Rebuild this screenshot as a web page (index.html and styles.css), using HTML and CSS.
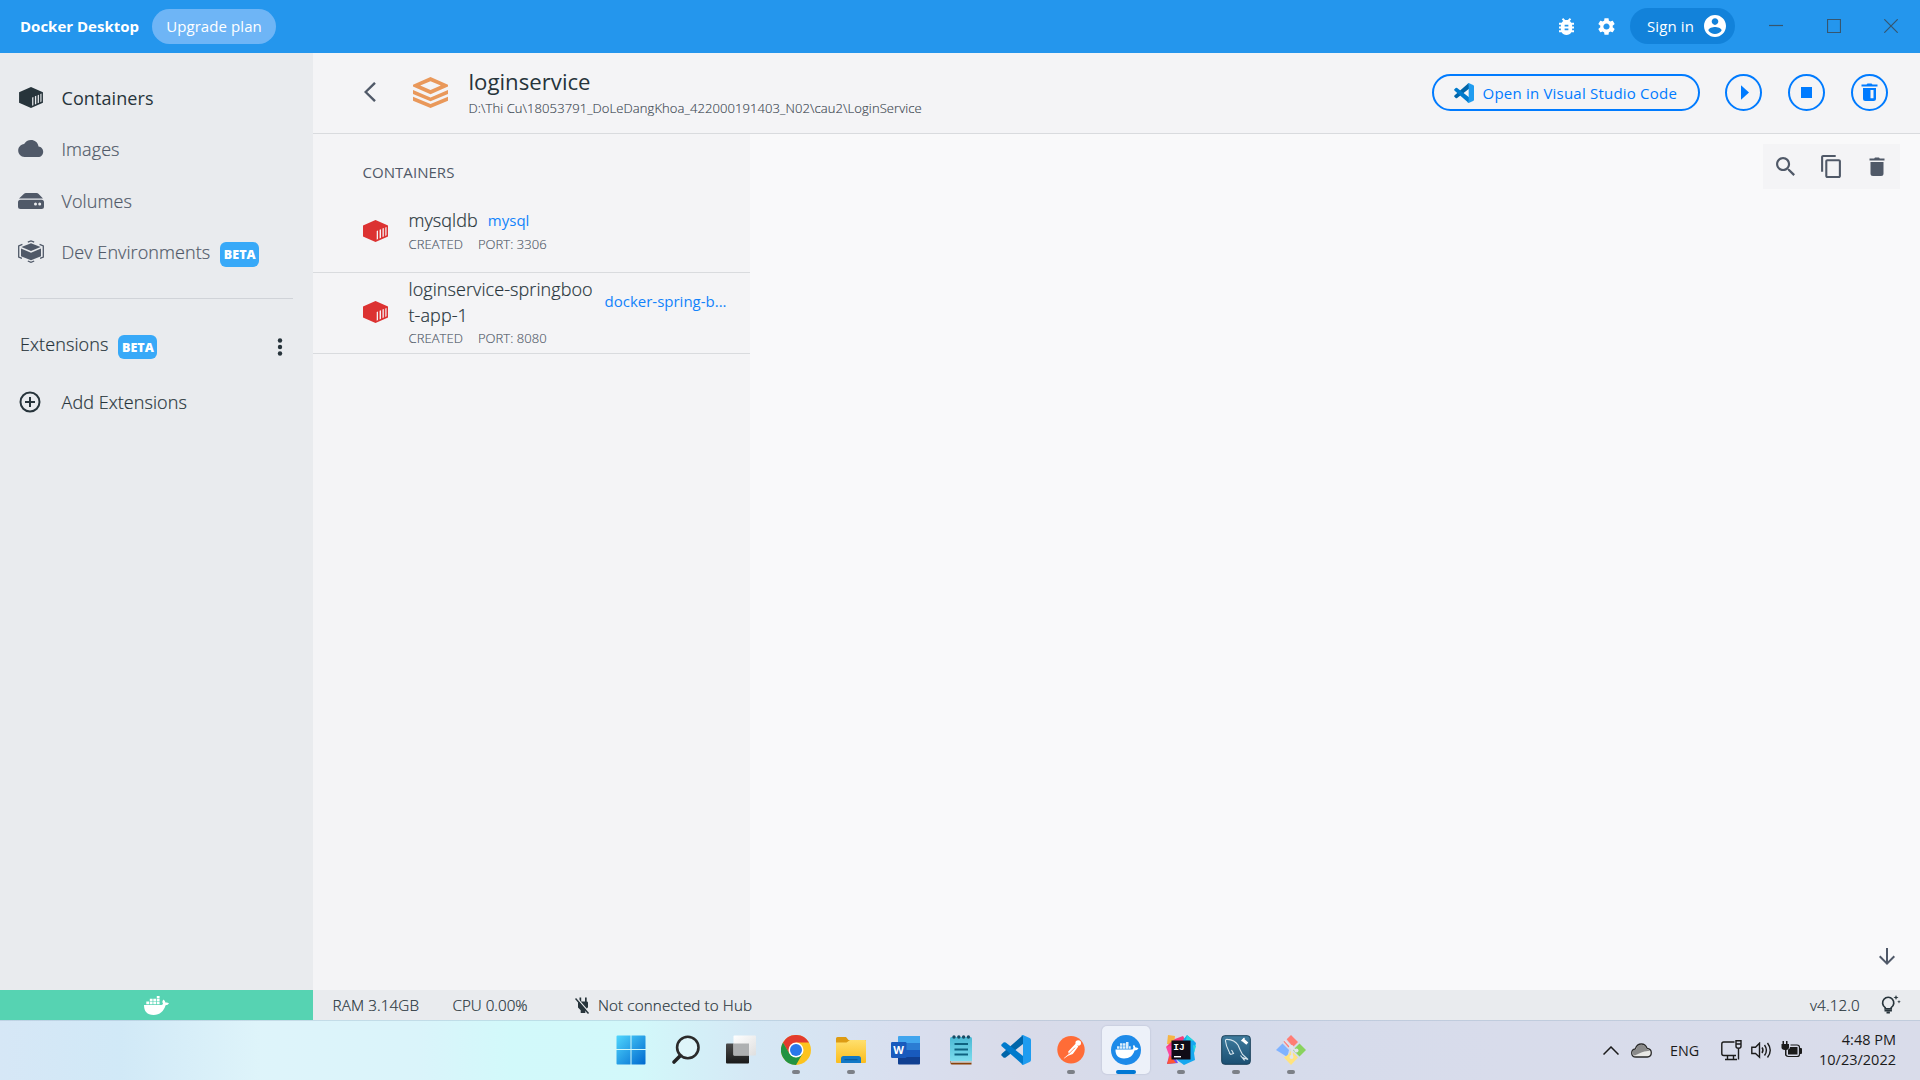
FILE: index.html
```html
<!DOCTYPE html>
<html lang="en">
<head>
<meta charset="utf-8">
<title>Docker Desktop</title>
<link rel="stylesheet" href="styles.css">
</head>
<body>
<svg class="defs" width="0" height="0">
  <defs>
    <linearGradient id="winGrad" x1="0" y1="0" x2="1" y2="1"><stop offset="0" stop-color="#4fd6fd"/><stop offset="1" stop-color="#0069cf"/></linearGradient>
    <linearGradient id="folderGrad" x1="0" y1="0" x2="0" y2="1"><stop offset="0" stop-color="#ffdf6d"/><stop offset="1" stop-color="#fbbd1d"/></linearGradient>
    <linearGradient id="darkGrad" x1="0" y1="0" x2="0" y2="1"><stop offset="0" stop-color="#4a4a4a"/><stop offset="1" stop-color="#191919"/></linearGradient>
    <linearGradient id="lightGrad" x1="0" y1="0" x2="1" y2="1"><stop offset="0" stop-color="#ffffff"/><stop offset="1" stop-color="#dfdfdf"/></linearGradient>
    <linearGradient id="noteGrad" x1="0" y1="0" x2="0" y2="1"><stop offset="0" stop-color="#4bb8d4"/><stop offset="1" stop-color="#7bdcee"/></linearGradient>
    <linearGradient id="sqlGrad" x1="0" y1="0" x2="0" y2="1"><stop offset="0" stop-color="#3f7c9e"/><stop offset="1" stop-color="#1b4f72"/></linearGradient>
    <symbol id="cube" viewBox="0 0 25 22">
      <path fill="currentColor" fill-rule="evenodd" d="M12.500 0 25 5.400v11.200L12.500 22 0 16.600V5.400zM13.700 11v8.700l1.300-.6v-8.700zM16.600 9.800v8.600l1.400-.6V9.200zM19.500 8.600v8.500l1.300-.6V8zM22.300 7.400v8.500l1.200-.6V6.900z"/>
    </symbol>
    <symbol id="vscode" viewBox="0 0 30 30">
      <path fill="#0065a9" d="M22 0 1 18.500q-1.500 1.500 0 2.500l1.500 1.400q1 .7 2.200 0L23 8.300z"/>
      <path fill="#007acc" d="M22 30 1 11.500q-1.500-1.500 0-2.500l1.500-1.400q1-.7 2.200 0L23 21.700z"/>
      <path fill="#1f9cf0" d="M22 .1 28.600 3q1.400.7 1.400 2v20q0 1.400-1.400 2L22 29.900q-1.300.2-1.800-.8 1.800.7 1.800-1.300V2.200q0-2-1.800-1.300.5-1 1.800-.8z"/>
    </symbol>
    <symbol id="whale" viewBox="0 0 25 19">
      <path fill="currentColor" d="M0 9h17.500q1.300-.3 1.500-1.500-1.200-2 .2-4 2 1.200 2.200 3 1.900-.4 3.600.7-1 2.100-3.400 2.100C19.700 15.300 16 19 9.600 19 3 19 0 15.300 0 9zM2.300 5.600h2.800v2.700H2.300zm3.500 0h2.800v2.700H5.800zm3.500 0h2.800v2.700H9.300zm3.500 0h2.800v2.700h-2.800zM5.800 2.800h2.800v2.300H5.800zm3.500 0h2.800v2.300H9.300zm3.500 0h2.800v2.300h-2.800zm0-2.800h2.800v2.200h-2.800z"/>
    </symbol>
  </defs>
</svg>
<div class="screen">
  <header class="titlebar">
    <span class="brand">Docker Desktop</span>
    <button class="upgrade">Upgrade plan</button>
    <div class="title-actions">
      <svg class="bug" viewBox="4 3 16 18"><path fill="#fff" d="M20 8h-2.810c-.45-.78-1.070-1.450-1.820-1.960L17 4.410 15.590 3l-2.170 2.170C12.960 5.060 12.490 5 12 5s-.96.060-1.410.17L8.410 3 7 4.410l1.620 1.630C7.880 6.550 7.260 7.220 6.810 8H4v2h2.090c-.05.33-.09.66-.09 1v1H4v2h2v1c0 .34.040.67.090 1H4v2h2.810c1.040 1.790 2.970 3 5.190 3s4.150-1.210 5.190-3H20v-2h-2.090c.05-.33.09-.66.09-1v-1h2v-2h-2v-1c0-.34-.04-.67-.09-1H20V8zm-6 8h-4v-2h4v2zm0-4h-4v-2h4v2z"/></svg>
      <svg class="gear" viewBox="2.200 2.400 19.600 19.200"><path fill="#fff" d="M19.140 12.940c.04-.3.060-.61.060-.94 0-.32-.02-.64-.07-.94l2.030-1.580c.18-.14.23-.41.120-.61l-1.920-3.320c-.12-.22-.37-.29-.59-.22l-2.390.96c-.5-.38-1.030-.7-1.620-.94l-.36-2.540c-.04-.24-.24-.41-.48-.41h-3.840c-.24 0-.43.17-.47.41l-.36 2.540c-.59.24-1.130.57-1.620.94l-2.390-.96c-.22-.08-.47 0-.59.22L2.740 8.870c-.12.21-.08.47.12.61l2.030 1.580c-.05.3-.09.63-.09.94s.02.64.070.94l-2.030 1.580c-.18.14-.23.41-.12.61l1.920 3.320c.12.22.37.29.59.22l2.390-.96c.5.38 1.030.7 1.620.94l.36 2.540c.05.24.24.41.48.41h3.840c.24 0 .44-.17.47-.41l.36-2.540c.59-.24 1.130-.56 1.620-.94l2.390.96c.22.08.47 0 .59-.22l1.920-3.320c.12-.22.070-.47-.12-.61l-2.010-1.580zM12 15.600c-1.980 0-3.600-1.620-3.600-3.600s1.620-3.600 3.600-3.600 3.600 1.620 3.600 3.600-1.620 3.600-3.600 3.600z"/></svg>
      <button class="signin"><span>Sign in</span>
        <svg class="avatar" viewBox="2 2 20 20"><path fill="#fff" d="M12 2C6.480 2 2 6.480 2 12s4.480 10 10 10 10-4.480 10-10S17.520 2 12 2zm0 3c1.660 0 3 1.340 3 3s-1.340 3-3 3-3-1.340-3-3 1.340-3 3-3zm0 14.200c-2.500 0-4.710-1.280-6-3.220.03-1.990 4-3.080 6-3.080 1.990 0 5.970 1.090 6 3.080-1.290 1.940-3.500 3.220-6 3.220z"/></svg>
      </button>
      <svg class="win-min" viewBox="0 0 14 14"><path d="M0 6.500h14"/></svg>
      <svg class="win-max" viewBox="0 0 14 14"><path d="M.5.500h13v13H.5z"/></svg>
      <svg class="win-close" viewBox="0 0 14 14"><path d="M.3.300l13.400 13.400M13.700.300.3 13.700"/></svg>
    </div>
  </header>

  <aside class="sidebar">
    <nav class="nav">
      <a class="nav-item active"><svg class="nav-icon" viewBox="0 0 26 24"><use href="#cube" x="1" y="1" width="24" height="21"/></svg><span class="nav-label">Containers</span></a>
      <a class="nav-item"><svg class="nav-icon" viewBox="0 0 26 24"><path fill="currentColor" d="M20.500 9.400C19.900 5.400 16.700 3 13 3 10 3 7.400 4.600 6.100 7.100 2.800 7.500.2 10.200.2 13.600c0 3.500 2.700 6.400 6.300 6.400h13.600c3 0 5.100-2.400 5.100-5.300 0-2.800-2-5.100-4.700-5.300z"/></svg><span class="nav-label">Images</span></a>
      <a class="nav-item"><svg class="nav-icon" viewBox="0 0 26 24"><path fill="currentColor" fill-rule="evenodd" d="M8 4h10.500q1.300 0 2.200 1L25 9.600H1L5.800 5Q6.800 4 8 4zM2.500 10.800h21q2.500 0 2.500 2.500v4.200q0 2.500-2.500 2.500h-21Q0 20 0 17.500v-4.200q0-2.500 2.500-2.500zm15 2.700a1.500 1.500 0 1 0 0 3 1.500 1.500 0 0 0 0-3zm4.200 0a1.500 1.500 0 1 0 0 3 1.500 1.500 0 0 0 0-3z"/></svg><span class="nav-label">Volumes</span></a>
      <a class="nav-item dev"><svg class="nav-icon" viewBox="0 0 26 24"><path fill="currentColor" d="M13 3.300 22.600 7 13 11 3.400 7zM3 8.600l10 4.200 10-4.200v7.600L13 20.300 3 16.200z"/><path fill="none" stroke="currentColor" stroke-width="1.300" d="M9.800 2.200 13 1l3.200 1.200M4.400 4.400.7 6v11l3.200 1.400M21.600 4.400 25.300 6v11l-3.200 1.400M9.800 21l3.200 1.400 3.200-1.400"/></svg><span class="nav-label">Dev Environments</span><span class="badge">BETA</span></a>
    </nav>
    <div class="ext-head"><span>Extensions</span><span class="badge">BETA</span>
      <svg class="dots" viewBox="0 0 6 18"><g fill="#27343b"><circle cx="3" cy="2.500" r="2.200"/><circle cx="3" cy="9" r="2.200"/><circle cx="3" cy="15.500" r="2.200"/></g></svg>
    </div>
    <a class="add-ext"><svg class="plus" viewBox="0 0 22 22"><path fill="none" stroke="#27343b" stroke-width="2" d="M11 6v10M6 11h10"/><circle cx="11" cy="11" r="9.500" fill="none" stroke="#27343b" stroke-width="2"/></svg><span>Add Extensions</span></a>
  </aside>

  <main class="main">
    <section class="app-head">
      <svg class="back" viewBox="0 0 12 20"><path fill="none" stroke="#505968" stroke-width="2.400" d="M11 .8 1.600 10l9.400 9.200"/></svg>
      <svg class="layers" viewBox="0 0 35 31"><g fill="#e9985a"><path fill-rule="evenodd" d="M17.500 0 35 7.700v1.800l-17.500 7.700L0 9.500V7.700zm0 4.200L7.200 8.600l10.300 4.500 10.300-4.500z"/><path d="M0 12.900l17.500 7.600L35 12.900v4L17.500 24.300 0 16.900z"/><path d="M0 19.800l17.500 7.300L35 19.800v3.900L17.500 31 0 23.700z"/></g></svg>
      <div class="app-title"><h1>loginservice</h1><p>D:\Thi Cu\18053791_DoLeDangKhoa_422000191403_N02\cau2\LoginService</p></div>
      <div class="app-actions">
        <button class="open-code"><svg viewBox="0 0 30 30"><use href="#vscode" width="30" height="30"/></svg><span>Open in Visual Studio Code</span></button>
        <button class="round"><svg viewBox="0 0 33 33"><path fill="#007bff" d="M14 9.200v14.600l8-7.300z"/></svg></button>
        <button class="round"><svg viewBox="0 0 33 33"><path fill="#007bff" d="M11 11h11v11H11z"/></svg></button>
        <button class="round"><svg viewBox="0 0 33 33"><path fill="#007bff" fill-rule="evenodd" d="M8.500 8.500h5l1-1h4l1 1h5v2h-16zM10 12h13v10.500q0 2.500-2.500 2.500h-8q-2.500 0-2.500-2.500zm7.500 2v8.300h3V14z"/></svg></button>
      </div>
    </section>

    <section class="list">
      <h2>CONTAINERS</h2>
      <article class="row first">
        <svg class="cube-red"><use href="#cube"/></svg>
        <div class="info"><div class="name-line"><span class="name">mysqldb</span><a class="image">mysql</a></div><div class="meta"><span>CREATED</span><span>PORT: 3306</span></div></div>
      </article>
      <article class="row second">
        <svg class="cube-red"><use href="#cube"/></svg>
        <div class="info"><div class="name-line"><span class="name">loginservice-springboot-app-1</span><a class="image">docker-spring-b...</a></div><div class="meta"><span>CREATED</span><span>PORT: 8080</span></div></div>
      </article>
    </section>

    <section class="logs">
      <div class="log-tools">
        <svg class="t-search" viewBox="3 3 17.500 17.500"><path fill="#505968" d="M15.500 14h-.79l-.28-.27C15.410 12.590 16 11.110 16 9.500 16 5.910 13.090 3 9.500 3S3 5.910 3 9.500 5.910 16 9.500 16c1.610 0 3.090-.59 4.230-1.570l.27.280v.79l5 4.990L20.490 19l-4.990-5zm-6 0C7.010 14 5 11.990 5 9.500S7.010 5 9.500 5 14 7.010 14 9.500 11.990 14 9.500 14z"/></svg>
        <svg class="t-copy" viewBox="2 1 19 22"><path fill="#505968" d="M16 1H4c-1.100 0-2 .9-2 2v14h2V3h12V1zm3 4H8c-1.100 0-2 .9-2 2v14c0 1.100.9 2 2 2h11c1.100 0 2-.9 2-2V7c0-1.100-.9-2-2-2zm0 16H8V7h11v14z"/></svg>
        <svg class="t-trash" viewBox="0 0 16 19"><path fill="#505968" d="M.5 1.500h4.700L6 .5h4l.8 1h4.700v2H.5zM1.500 5h13v11.500Q14.500 19 12 19H4q-2.500 0-2.500-2.500z"/></svg>
      </div>
      <svg class="down" viewBox="0 0 16 17"><path fill="none" stroke="#505968" stroke-width="2" d="M8 0v15.500M.7 8.300 8 15.600l7.300-7.300"/></svg>
    </section>
  </main>

  <footer class="status">
    <div class="engine"><svg><use href="#whale"/></svg></div>
    <span class="ram">RAM 3.14GB</span><span class="cpu">CPU 0.00%</span>
    <svg class="plug" viewBox="0 0 15 17"><path fill="#27343b" d="M4.500.5h1.700v4H10V.500h1.700v4q1.300 0 1.300 1.300v4.500l-2.700 3V16H5.700v-2.700L3 10.400V5.800l1.500-1z"/><path stroke="#e9ebee" stroke-width="1.300" d="M1.500.8l13 15"/><path stroke="#27343b" stroke-width="1.500" d="M.5 1.500l13 15"/></svg>
    <span class="hub">Not connected to Hub</span>
    <span class="version">v4.12.0</span>
    <svg class="bulb" viewBox="0 0 20 19"><g fill="none" stroke="#27343b" stroke-width="1.700"><path d="M4.200 12.600a5.600 5.600 0 1 1 6 0v1.200h-6z"/><path d="M3.500 15.700h7.400M5.500 17.600h3.400"/></g><path fill="#27343b" d="M15 0l.7 1.800 1.800.7-1.800.7L15 5l-.7-1.800-1.800-.7 1.800-.7zM18 5l.5 1.300 1.300.5-1.300.5L18 8.600l-.5-1.300-1.300-.5 1.300-.5z"/></svg>
  </footer>

  <div class="taskbar">
    <div class="apps">
      <div class="app"><svg viewBox="0 0 30 30"><path fill="url(#winGrad)" d="M1.500.500H14.500V14H.5V1.500q0-1 1-1zM15.500 .500h13q1 0 1 1V14h-14zM.5 15h14v14.500h-13q-1 0-1-1zM15.500 15h14v13.500q0 1-1 1h-13z"/></svg></div>
      <div class="app"><svg viewBox="0 0 30 30"><path stroke="#222" stroke-width="3.600" stroke-linecap="round" d="M9.500 20.500 3 27"/><circle cx="16.800" cy="12.500" r="10.700" fill="#f4fbfc" fill-opacity=".35" stroke="#2a2a2a" stroke-width="2.600"/></svg></div>
      <div class="app"><svg viewBox="0 0 30 30"><rect y="8.500" width="23" height="20" rx="1" fill="url(#darkGrad)"/><rect x="7.500" y=".5" width="22.500" height="20" rx="1" fill="url(#lightGrad)"/><path fill="#aeb0b1" d="M7.500 8.500H23v12H7.500z"/></svg></div>
      <div class="app running"><svg viewBox="0 0 30 30"><circle cx="15" cy="15" r="15" fill="#fcc31e"/><path fill="#e33b2e" d="M2 7.500A15 15 0 0 1 28 7.500H15L8.500 19z"/><path fill="#229342" d="M2 7.500A15 15 0 0 0 15 30l6.500-11.200-6.500 3.700-6.500-3.700z"/><circle cx="15" cy="15" r="7.500" fill="#fff"/><circle cx="15" cy="15" r="6" fill="#2a78ea"/></svg></div>
      <div class="app running"><svg viewBox="0 0 30 30"><path fill="#dd9b13" d="M0 3.500Q0 2 1.500 2H10l2.500 3H29q1 0 1 1v5H0z"/><path fill="url(#folderGrad)" d="M0 7.500h10.500L14 5h15q1 0 1 1v21q0 1-1 1H1q-1 0-1-1z"/><path fill="#1278c6" d="M7.500 21h15q2.500 0 2.500 2.500V28H5v-4.500Q5 21 7.500 21z"/><path stroke="#0a5797" d="M8.500 24.700h13"/></svg></div>
      <div class="app"><svg viewBox="0 0 30 30"><path fill="#41a5ee" d="M8 1h21v7.500H7V2q0-1 1-1z"/><path fill="#2b7cd3" d="M7 8h22v7H7z"/><path fill="#185abd" d="M7 15h22v7H7z"/><path fill="#103f91" d="M7 22h22v6.500q0 1-1 1H8q-1 0-1-1z"/><rect x="0" y="7" width="15.500" height="16" rx="1.200" fill="#185abd"/><text x="7.600" y="19" class="word-letter">W</text></svg></div>
      <div class="app"><svg viewBox="0 0 30 30"><path fill="#8a4209" d="M4.500 26h21v3.500H6q-1.500 0-1.500-1.500z"/><path fill="url(#noteGrad)" d="M4 3.500Q4 2 5.500 2h19Q26 2 26 3.500V26H4z"/><path fill="#c6c9cb" d="M5 26h21v1.800H5z"/><path stroke="#0e6280" stroke-width="1.800" d="M8.500 9h13.500M8.500 14.500h13.500M8.500 19.500h13.500"/><g fill="#174b65"><circle cx="8" cy="2" r="1.700"/><circle cx="12.800" cy="2" r="1.700"/><circle cx="17.600" cy="2" r="1.700"/><circle cx="22.400" cy="2" r="1.700"/></g></svg></div>
      <div class="app"><svg viewBox="0 0 30 30"><use href="#vscode" width="30" height="30"/></svg></div>
      <div class="app running"><svg viewBox="0 0 30 30"><circle cx="15" cy="14.800" r="13.700" fill="#ff6c37"/><g fill="#fff"><circle cx="22.200" cy="8" r="2.800"/><path d="M19.500 8.800l2.800 2.800-5.500 7.500-4.700 1.700-4.300 3 .3-.9 4.600-4-.5-2.500z"/></g><path stroke="#ff6c37" stroke-width=".8" d="M12.500 19.200l6.500-6.500"/></svg></div>
      <div class="app selected"><svg class="docker" viewBox="0 0 30 30"><circle cx="15" cy="15" r="15" fill="#1d8ae9"/><path fill="#fff" d="M4.500 14.500h17q1.700-1.500.5-3.500l1-1.300 1.500 2.800q1.500-.3 3 .7-1 2.300-4 2.300C22.300 20.500 18.500 23.500 13 23.500c-6 0-8.700-3.800-8.500-9z"/><path fill="#dceefc" d="M6 11.300h2.500v2.500H6zm3-3h2.500v2.500H9zm0 3h2.500v2.500H9zm3-3h2.500v2.500H12zm0 3h2.500v2.500H12zm3-4.300h2.500v6.800H15zm3 4.300h1.700v2.500H18z"/></svg></div>
      <div class="app running"><svg viewBox="0 0 30 30"><path fill="#f7b545" d="M2 0l7 1-1 9-7-1z"/><path fill="#f43c7a" d="M9 4 17 1l3 5-7 8-13-2 4-4z"/><path fill="#fc46a1" d="M0 12l9-2v13l-8 6 2-9z"/><path fill="#16a7ef" d="M17 5l4-5 7 6 2 2-2 10 1 7-11 5-7-5z"/><path fill="#26d7df" d="M21 0l7 6-8-1zM27 10l3 1-2 7z"/><path fill="#754df0" d="M8 20l4 8-11 1 3-8z"/><path fill="#ff5634" d="M1 29l3-9 6 8z"/><path fill="#100c16" d="M5.500 5.500h19v19h-19z"/><text x="7.300" y="15" class="ij-letters">IJ</text><path fill="#fff" d="M8 21h7v1.400H8z"/></svg></div>
      <div class="app running"><svg viewBox="0 0 30 30"><rect x=".7" y=".7" width="28.600" height="28.600" rx="3" fill="url(#sqlGrad)" stroke="#183f58"/><path fill="none" stroke="#d5e4ec" stroke-width="1.100" d="M9.500 19.500l-1.500-3Q5 11 4.500 6q-.2-2 2-1.600 7 .4 10.500 5.600 2 5 4.500 9.500l5.500 5-4.500-1.500 1 2.500-4-5M9.500 19.500l-1.500-1.800M9.500 19.500l3-1-2-3.500"/><path stroke="#fff" stroke-width="3" d="M21.500 4.500l4.800 4.200"/><path stroke="#fff" stroke-width="1.200" d="M20.500 6l3-3"/></svg></div>
      <div class="app running"><svg viewBox="0 0 30 30"><path fill="#ff7d75" d="M15 0l7 7-4.500 4.500-2-1.500-3.500-4-1.300-1.700zM7.500 6.500 9 5.500l5 5-1.500 2z"/><path fill="#80b3ff" d="M6.500 8.500 13 15l-1.500 6-1 .500L0 15z"/><path fill="#89d35e" d="M23.500 8.500 30 15l-6.500 6.500L17 15z"/><path fill="#ffe37f" d="M8 22.500l5-3.500 2-3.500 7 7L15 30z"/><g fill="none" stroke="#e2e4ee" stroke-width="1.600"><path d="M8.500 5l7.500 8v9M15 12l5 3.500"/></g><g fill="#e2e4ee"><circle cx="15.500" cy="12" r="2"/><circle cx="20.500" cy="15.500" r="2"/><circle cx="15.500" cy="22" r="2"/></g></svg></div>
    </div>
    <div class="tray">
      <svg class="up" viewBox="0 0 16 9"><path fill="none" stroke="#1b1b1b" stroke-width="1.500" d="M.5 8.500 8 1l7.500 7.500"/></svg>
      <svg class="cloud" viewBox="0 0 21 15"><path fill="#e9e9e6" stroke="#2a2a2a" stroke-width="1.300" d="M5 14Q.7 14 .7 10q0-3.300 3.600-4Q6 1 10.300 1q4.200 0 5.700 4.300 4.300.5 4.300 4.500t-4 4.200z"/><path fill="#8a8a8a" d="M1.300 9.800Q1.500 6.800 5 6.500q1.200-4.700 5.300-4.700 3.800 0 5 3.500-.5.300 4 2.800-5-.8-9 1.500l-6.500 3q-2.500-.8-2.500-2.800z"/></svg>
      <span class="lang">ENG</span>
      <svg class="net" viewBox="0 0 21 21"><g fill="none" stroke="#1b1b1b" stroke-width="1.400"><path d="M13.500 2H2.700Q.8 2 .8 4v9.500q0 2 1.900 2H15M6.500 15.500v3.700m6-3.700v3.700M4 19.500h12M17.500 8.500v11"/><path d="M15 .7h5v5.500q0 2-2.500 2T15 6.200zM15 4h5"/></g></svg>
      <svg class="sound" viewBox="0 0 21 17"><g fill="none" stroke="#1b1b1b" stroke-width="1.400"><path d="M8.500 1.200v14L4.500 11.500H.8V5.300h3.700z"/><path d="M11 5.500q2 2.700 0 5.500"/><path d="M13.500 3q3.900 5.300 0 10.500"/><path d="M16.500 1q5.500 7.300 0 14.500"/></g></svg>
      <svg class="battery" viewBox="0 0 21 17"><path fill="#1b1b1b" d="M1.500 0H3v3h2V0h1.500v3H8v3.500Q8 8.500 5.500 9v5.500H4V9Q.5 8.500.5 6.500V3h1zM9 6h7.500v7.500H7V8.700Q9 8 9 6zM19 7h1q1 0 1 1v4q0 1-1 1h-1z"/><path fill="none" stroke="#1b1b1b" stroke-width="1.200" d="M9.500 4H16q2.500 0 2.500 2.500v6.700q0 2.300-2.500 2.300H7.500q-1.700 0-2.700-1.300"/></svg>
      <div class="clock"><span>4:48 PM</span><span>10/23/2022</span></div>
    </div>
  </div>
</div>
</body>
</html>
```
FILE: styles.css
```css
* { box-sizing: border-box; }
html, body { margin: 0; height: 100%; overflow: hidden; }
body { font-family: "Open Sans", "Noto Sans", sans-serif; color: #27343b; }
button { font: inherit; border: 0; margin: 0; padding: 0; background: none; }
h1, h2, p { margin: 0; font-weight: 400; }
svg { display: block; flex: none; }
.defs { position: absolute; }

.screen {
  width: 1920px; height: 1080px; display: grid; background: #f4f4f6;
  grid-template: "title title" 53px "side main" 937px "status status" 30px "task task" 60px / 313px 1607px;
}

/* title bar */
.titlebar { grid-area: title; background: #2496ed; display: flex; align-items: center; color: #fff; padding-left: 20px; white-space: nowrap; }
.brand { width: 132px; font-size: 15px; font-weight: 700; padding-bottom: 1px; }
.upgrade { width: 124px; height: 35px; padding-bottom: 2px; border-radius: 18px; background: #6eb5f6; color: #fff; font-size: 15px; letter-spacing: .08px; }
.title-actions { margin-left: auto; display: flex; align-items: center; padding-right: 22px; }
.bug { width: 15px; height: 17px; margin-right: 24px; }
.gear { width: 17px; height: 17px; margin-right: 15px; }
.signin { width: 105px; height: 36px; margin-top: -1px; border-radius: 18px; background: #1282da; color: #fff; display: flex; align-items: center; justify-content: space-between; padding: 0 9px 0 17px; font-size: 15px; letter-spacing: .1px; }
.avatar { width: 22px; height: 22px; }
.win-min, .win-max, .win-close { width: 14px; height: 14px; margin-top: -1px; fill: none; stroke: #36566f; stroke-width: 1.200; }
.win-min { margin-left: 34px; }
.win-max { margin-left: 44px; }
.win-close { margin-left: 43px; }

/* sidebar */
.sidebar { grid-area: side; background: #e9ebee; }
.nav { margin: 0 20px; padding: 19px 0 20px; height: 246px; border-bottom: 1px solid #d0d3d8; }
.nav-item { display: flex; align-items: center; height: 51.600px; color: #505968; font-size: 18px; font-weight: 300; letter-spacing: .08px; -webkit-text-stroke: .2px currentColor; white-space: nowrap; }
.nav-item.active { color: #27343b; font-weight: 500; letter-spacing: .08px; -webkit-text-stroke: 0; }
.nav-item.dev .nav-icon, .nav-item.dev .nav-label { margin-top: -2px; }
.nav-icon { width: 26px; height: 24px; margin: 0 17.500px 0 -2px; }
.badge { height: 25px; width: 39px; margin-left: 10px; border-radius: 6px; background: #38a9f8; color: #fff; font-size: 12.500px; font-weight: 800; line-height: 26px; text-align: center; letter-spacing: 0; -webkit-text-stroke: 0; position: relative; top: 2px; }
.ext-head { display: flex; align-items: center; height: 52px; margin-top: 19px; padding: 0 30px 0 20px; font-size: 18px; font-weight: 300; letter-spacing: .1px; -webkit-text-stroke: .2px currentColor; }
.ext-head .badge { height: 24px; top: 3px; }
.dots { width: 6px; height: 18px; margin-left: auto; margin-top: 5px; }
.add-ext { display: flex; align-items: center; height: 50px; margin-top: 7px; padding-left: 19px; font-size: 18px; font-weight: 300; letter-spacing: .07px; -webkit-text-stroke: .2px currentColor; }
.plus { width: 22px; height: 22px; margin-right: 20.500px; }

/* main area */
.main { grid-area: main; display: grid; grid-template: 81px 1fr / 437px 1fr; }
.app-head { grid-column: 1 / 3; border-bottom: 1px solid #d9dbde; display: flex; padding-left: 51px; }
.back { width: 12px; height: 20px; margin: 29px 37px 0 0; }
.layers { width: 35px; height: 31px; margin: 24px 20.500px 0 0; }
.app-title h1 { font-size: 22.200px; line-height: 30px; margin-top: 14px; }
.app-title p { font-size: 13px; line-height: 20px; margin-top: 1px; font-weight: 300; letter-spacing: .09px; -webkit-text-stroke: .15px currentColor; color: #3c4751; white-space: nowrap; }
.app-actions { margin: 21px 32px 0 auto; display: flex; gap: 26px; }
.open-code { width: 268px; height: 37px; border: 2px solid #007bff; border-radius: 19px; display: flex; align-items: center; padding-left: 20px; color: #007bff; font-size: 15px; font-weight: 500; letter-spacing: .21px; margin-right: -1px; white-space: nowrap; }
.open-code svg { width: 20px; height: 20px; margin-right: 8.500px; }
.round { width: 37px; height: 37px; border: 2px solid #007bff; border-radius: 50%; }
.round svg { width: 33px; height: 33px; }

.list h2 { font-size: 15px; line-height: 20px; margin: 28px 0 1px 49.500px; color: #505968; font-weight: 500; letter-spacing: .05px; }
.row { display: flex; border-bottom: 1px solid #d9dbde; padding-left: 50px; }
.row.first { height: 90px; }
.row.second { height: 81px; }
.cube-red { width: 25px; height: 22px; margin-right: 20.500px; color: #dc3232; }
.first .cube-red { margin-top: 37px; }
.second .cube-red { margin-top: 28px; }
.name-line { display: flex; align-items: center; }
.name { font-size: 18px; font-weight: 300; letter-spacing: .08px; -webkit-text-stroke: .2px currentColor; line-height: 26px; max-width: 187px; word-break: break-all; }
.image { color: #1283fb; font-size: 15px; line-height: 22px; font-weight: 400; margin-left: 10px; white-space: nowrap; }
.meta { display: flex; gap: 15px; font-size: 13px; line-height: 20px; font-weight: 300; letter-spacing: .06px; -webkit-text-stroke: .15px currentColor; color: #505968; }
.first .info { padding-top: 24px; }
.first .meta { padding-top: 1px; }
.second .info { padding-top: 3px; }
.second .image { margin-top: -2px; margin-left: 9px; }

.logs { background: #f9f9fa; display: flex; flex-direction: column; align-items: flex-end; justify-content: space-between; padding: 10px 20px 25px 0; }
.log-tools { width: 137px; height: 45px; background: #f4f4f6; display: flex; align-items: center; padding-left: 13px; }
.t-search { width: 19px; height: 19px; margin-right: 26px; }
.t-copy { width: 20px; height: 23px; margin-right: 28px; }
.t-trash { width: 16px; height: 19px; }
.down { width: 16px; height: 17px; margin-right: 5px; }

/* status bar */
.status { grid-area: status; background: #e9ebee; display: flex; align-items: center; font-size: 15.200px; font-weight: 300; letter-spacing: .12px; -webkit-text-stroke: .2px currentColor; white-space: nowrap; }
.engine { width: 313px; height: 30px; background: #56d3b2; color: #fff; display: flex; align-items: center; justify-content: center; }
.engine svg { width: 25px; height: 19px; }
.ram { margin-left: 19.500px; width: 120px; }
.cpu { width: 122.500px; letter-spacing: 0; }
.plug { width: 15px; height: 17px; margin-right: 8px; }
.version { margin-left: auto; width: 71px; }
.bulb { width: 20px; height: 19px; margin-right: 19px; margin-top: -2px; }

/* taskbar */
.taskbar {
  grid-area: task; display: flex; justify-content: space-between; border-top: 1px solid rgba(150, 175, 195, .35);
  background: linear-gradient(90deg, #d6e7f6 0, #d1e9f7 120px, #def4fa 260px, #daf4fa 420px, #d2f9fa 510px, #d2f8fa 640px, #d5e8f5 750px, #d9dfef 900px, #d9dbe9 1020px, #d5dbeb 1200px, #d8dceb 1500px, #d9dcea 1920px);
}
.apps { display: flex; gap: 7px; padding: 5px 0 0 607px; }
.app { width: 48px; height: 48px; display: flex; flex-direction: column; align-items: center; padding-top: 9px; border-radius: 5px; }
.app svg { width: 30px; height: 30px; }
.running::after, .selected::after { content: ""; width: 8px; height: 4px; margin-top: 5px; border-radius: 2px; background: #7c8087; }
.selected { background: #edf1f9; box-shadow: 0 0 1px 1px rgba(120, 130, 160, .13); }
.selected::after { width: 20px; background: #0078d4; }
.word-letter { fill: #fff; font: 700 11px "Open Sans", sans-serif; text-anchor: middle; }
.ij-letters { fill: #fff; font: 700 9.500px "Liberation Mono", monospace; }
.tray { display: flex; align-items: center; padding-right: 24px; color: #1b1b1b; font-family: "Open Sans", "Noto Sans", sans-serif; white-space: nowrap; }
.up { width: 16px; height: 9px; margin-right: 12px; }
.cloud { width: 21px; height: 15px; margin: -1px 18px 0 0; }
.lang { width: 51px; font-size: 14.300px; }
.net { width: 21px; height: 21px; margin: -1px 9px 0 0; }
.sound { width: 21px; height: 17px; margin: -1px 9px 0 0; }
.battery { width: 21px; height: 17px; margin-top: -2px; }
.clock { display: flex; flex-direction: column; align-items: flex-end; width: 94px; margin-top: -2px; font-size: 14.500px; line-height: 20px; }
```
